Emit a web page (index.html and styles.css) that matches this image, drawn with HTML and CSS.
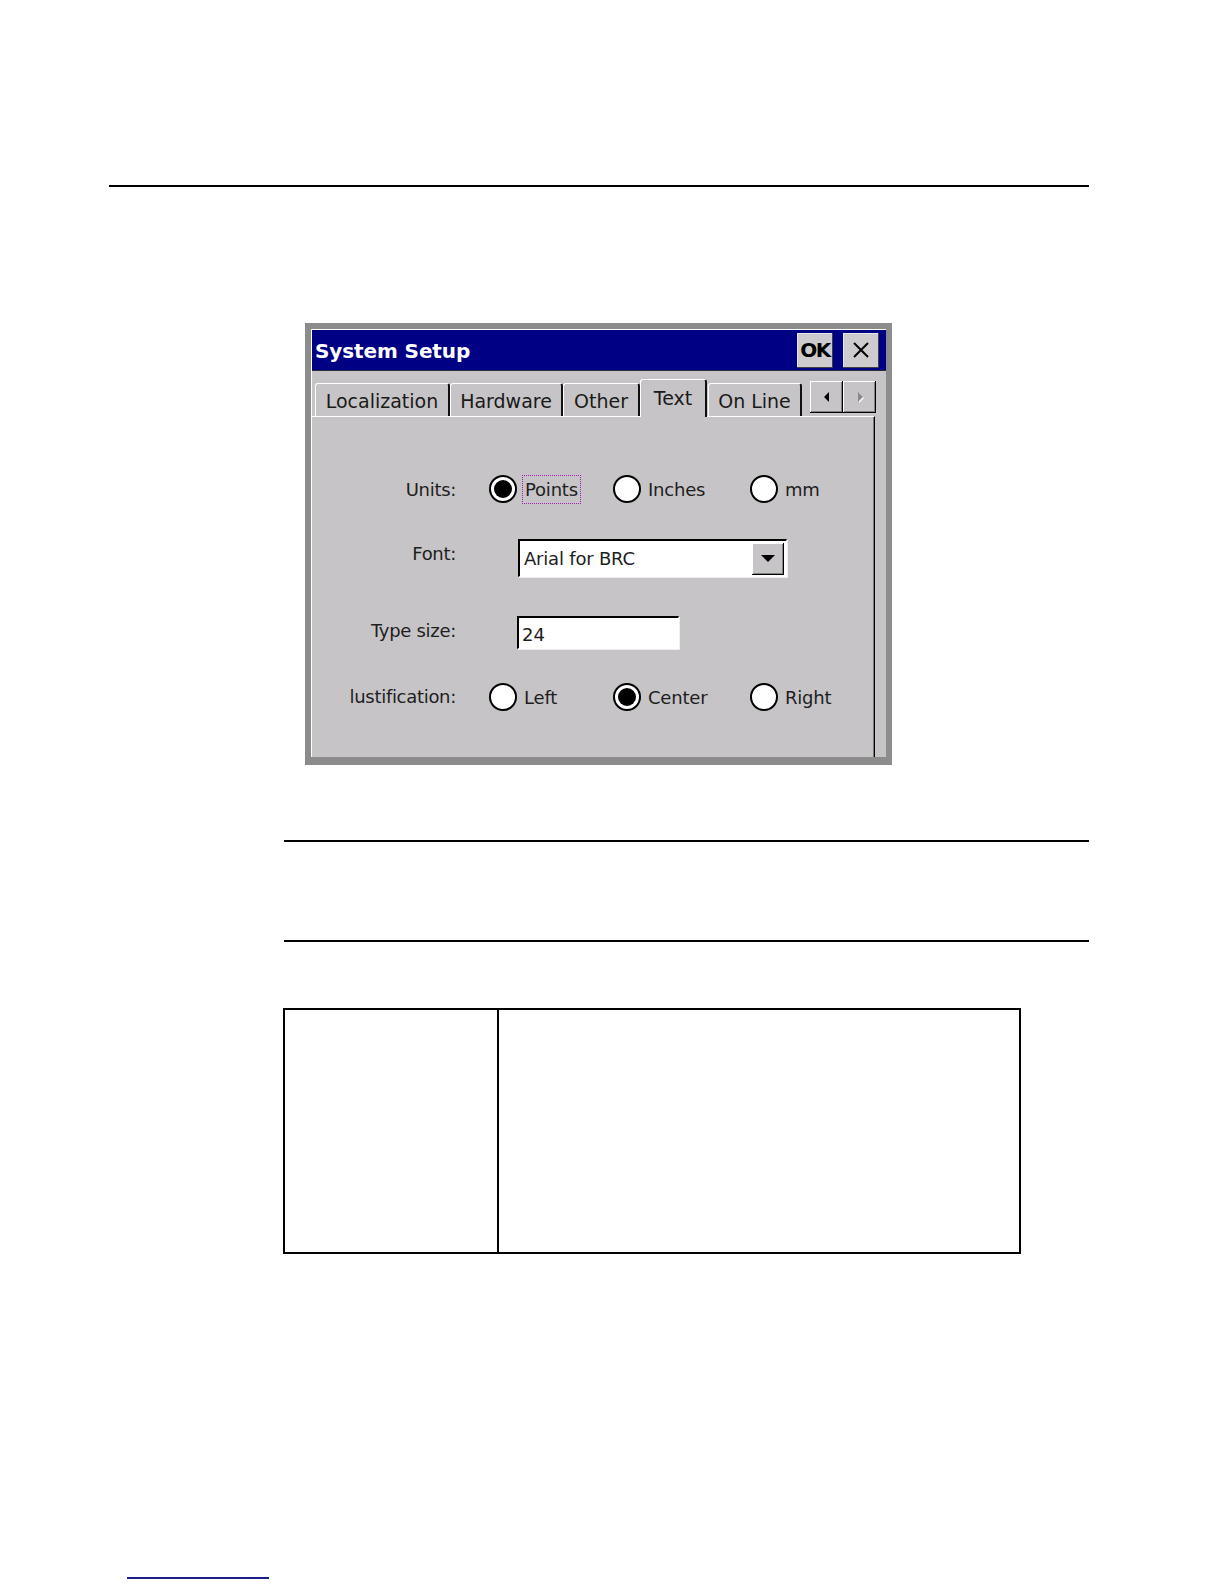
FILE: index.html
```html
<!DOCTYPE html>
<html>
<head>
<meta charset="utf-8">
<title>System Setup</title>
<link rel="stylesheet" href="styles.css">
</head>
<body>
<div class="page">
  <div class="rule rule-top"></div>

  <div class="dialog">
    <div class="dlg-inner">
      <div class="titlebar">
        <span class="title">System Setup</span>
        <div class="tb-buttons">
          <div class="tb-btn ok">OK</div>
          <div class="tb-btn close">
            <svg width="20" height="20" viewBox="0 0 20 20"><path d="M3 3 L17 17 M17 3 L3 17" stroke="#000" stroke-width="2" fill="none"/></svg>
          </div>
        </div>
      </div>

      <div class="tabrow">
        <div class="tab t-loc">Localization</div>
        <div class="tab t-hw">Hardware</div>
        <div class="tab t-other">Other</div>
        <div class="tab t-text active">Text</div>
        <div class="tab t-online">On Line</div>
        <div class="scroll">
          <div class="sbtn"><svg width="10" height="14" viewBox="0 0 10 14"><path d="M7 2 L2 7 L7 12 Z" fill="#000"/></svg></div>
          <div class="sbtn"><svg width="10" height="14" viewBox="0 0 10 14"><path d="M3 2 L8 7 L3 12 Z" fill="#fff" transform="translate(1,1)"/><path d="M3 2 L8 7 L3 12 Z" fill="#8a8a8a"/></svg></div>
        </div>
      </div>

      <div class="panel">
        <div class="row row-units">
          <div class="label">Units:</div>
          <div class="opts">
            <div class="opt o1"><span class="radio checked"></span><span class="otext focus">Points</span></div>
            <div class="opt o2"><span class="radio"></span><span class="otext">Inches</span></div>
            <div class="opt o3"><span class="radio"></span><span class="otext">mm</span></div>
          </div>
        </div>
        <div class="row row-font">
          <div class="label">Font:</div>
          <div class="combo">
            <span class="combo-text">Arial for BRC</span>
            <span class="combo-btn"><svg width="14" height="8" viewBox="0 0 14 8"><path d="M0 0 H14 L7 7 Z" fill="#000"/></svg></span>
          </div>
        </div>
        <div class="row row-size">
          <div class="label">Type size:</div>
          <div class="field">24</div>
        </div>
        <div class="row row-just">
          <div class="label">lustification:</div>
          <div class="opts">
            <div class="opt o1"><span class="radio"></span><span class="otext">Left</span></div>
            <div class="opt o2"><span class="radio checked"></span><span class="otext">Center</span></div>
            <div class="opt o3"><span class="radio"></span><span class="otext">Right</span></div>
          </div>
        </div>
      </div>
    </div>
  </div>

  <div class="rule rule-mid1"></div>
  <div class="rule rule-mid2"></div>

  <table class="grid">
    <tr><td class="c1"></td><td class="c2"></td></tr>
  </table>

  <div class="link-line"></div>
</div>
</body>
</html>
```

FILE: styles.css
```css
* { box-sizing: border-box; }
html, body { margin: 0; padding: 0; background: #fff; }
body { font-family: "DejaVu Sans", sans-serif; }
.page { width: 1224px; min-height: 1584px; padding-top: 185px; }

.rule { height: 2px; background: #000; }
.rule-top { margin-left: 109px; width: 980px; }
.rule-mid1 { margin-top: 75px; margin-left: 284px; width: 805px; }
.rule-mid2 { margin-top: 98px; margin-left: 284px; width: 805px; }

/* dialog */
.dialog {
  margin-top: 136px;
  margin-left: 305px;
  width: 587px;
  height: 442px;
  border: 6px solid #8c8c8c;
  border-bottom-width: 8px;
  background: #c6c4c6;
}
.dlg-inner {
  height: 100%;
  border-top: 1px solid #fff;
  border-left: 1px solid #fff;
  display: flex;
  flex-direction: column;
  background: #c6c4c6;
}
.titlebar {
  height: 41px;
  background: #000084;
  display: flex;
  align-items: center;
  justify-content: space-between;
  padding-left: 3px;
  padding-right: 7px;
  border-bottom: 1px solid #2a2a40;
}
.title {
  color: #fff;
  font-weight: bold;
  font-size: 20px;
  padding-top: 2px;
  letter-spacing: -0.1px;
}
.tb-buttons { display: flex; gap: 10px; }
.tb-btn {
  width: 36px;
  height: 35px;
  background: #cdcbcd;
  display: flex;
  align-items: center;
  justify-content: center;
  box-shadow: inset -1px -1px #404040, inset 1px 1px #e8e8e8;
}
.tb-btn.ok { font-weight: bold; font-size: 20px; color: #000; letter-spacing: -1.5px; }

/* tabs */
.tabrow {
  height: 45px;
  display: flex;
  align-items: flex-end;
  padding-left: 3px;
  position: relative;
  z-index: 1;
}
.tab {
  height: 33px;
  font-size: 19px;
  color: #1a1a1a;
  display: flex;
  align-items: center;
  justify-content: center;
  border-top: 1px solid #fff;
  border-left: 1px solid #fff;
  border-right: 2px solid #111;
  border-radius: 3px 3px 0 0;
  background: #c6c4c6;
  padding-top: 1px;
}
.t-loc { width: 135px; }
.t-hw { width: 113px; }
.t-other { width: 77px; }
.t-text { width: 67px; }
.t-online { width: 94px; margin-left: 1px; }
.tab.active {
  height: 38px;
  margin-bottom: -1px;
  padding-bottom: 3px;
}
.scroll {
  display: flex;
  margin-left: 8px;
  align-self: flex-start;
  margin-top: 10px;
}
.sbtn {
  width: 33px;
  height: 32px;
  display: flex;
  align-items: center;
  justify-content: center;
  background: #c6c4c6;
  box-shadow: inset -1px -1px #000, inset 1px 1px #fff, inset -2px -2px #808080;
}

/* panel */
.panel {
  flex: 1;
  width: 563px;
  border-top: 1px solid #fff;
  border-right: 1px solid #000;
  box-shadow: inset -1px 0 #7a7a7a;
  padding-top: 57px;
  font-size: 18px;
  color: #1e1e1e;
}
.row { display: flex; align-items: center; }
.row-units { height: 30px; }
.row-font { height: 38px; margin-top: 35px; }
.row-size { height: 33px; margin-top: 39px; }
.row-just { height: 30px; margin-top: 33px; }
.label {
  width: 144px;
  text-align: right;
  letter-spacing: -0.3px;
}
.row-font .label { padding-bottom: 10px; }
.row-size .label { padding-bottom: 4px; }
.row-just .label { padding-bottom: 2px; }
.opts { display: flex; margin-left: 33px; align-items: center; }
.opt { display: flex; align-items: center; gap: 7px; }
.opt.o1 { width: 124px; }
.opt.o2 { width: 137px; }
.radio {
  width: 28px;
  height: 28px;
  border-radius: 50%;
  background: #fff;
  border: 2.5px solid #000;
  position: relative;
  flex: none;
}
.radio.checked::after {
  content: "";
  position: absolute;
  left: 2.5px;
  top: 2.5px;
  width: 18px;
  height: 18px;
  border-radius: 50%;
  background: #000;
}
.otext { letter-spacing: -0.2px; }
.otext.focus {
  outline: 1px dotted #a020b0;
  padding: 3px 2px;
  margin-left: -1px;
}

.combo {
  margin-left: 62px;
  width: 269px;
  height: 38px;
  background: #fff;
  border-top: 2px solid #000;
  border-left: 2px solid #000;
  border-bottom: 1px solid #fff;
  border-right: 1px solid #fff;
  box-shadow: 1px 1px 0 #eee;
  display: flex;
  align-items: center;
  justify-content: space-between;
  padding-right: 2px;
}
.combo-text { padding-left: 4px; letter-spacing: -0.2px; }
.combo-btn {
  width: 32px;
  height: 32px;
  background: #c6c4c6;
  display: flex;
  align-items: center;
  justify-content: center;
  box-shadow: inset -1px -1px #000, inset 1px 1px #fff, inset -2px -2px #808080;
}
.field {
  margin-left: 61px;
  width: 162px;
  height: 33px;
  background: #fff;
  border-top: 2px solid #000;
  border-left: 2px solid #000;
  border-bottom: 1px solid #fff;
  border-right: 1px solid #fff;
  box-shadow: 1px 1px 0 #eee;
  padding-left: 3px;
  display: flex;
  align-items: center;
  padding-top: 2px;
}

/* table */
.grid {
  margin-top: 66px;
  margin-left: 283px;
  width: 738px;
  height: 246px;
  border-collapse: collapse;
}
.grid td { border: 2px solid #000; padding: 0; }
.grid .c1 { width: 214px; }

.link-line {
  margin-top: 323px;
  margin-left: 127px;
  width: 142px;
  height: 2px;
  background: #1c1c8c;
}
```
